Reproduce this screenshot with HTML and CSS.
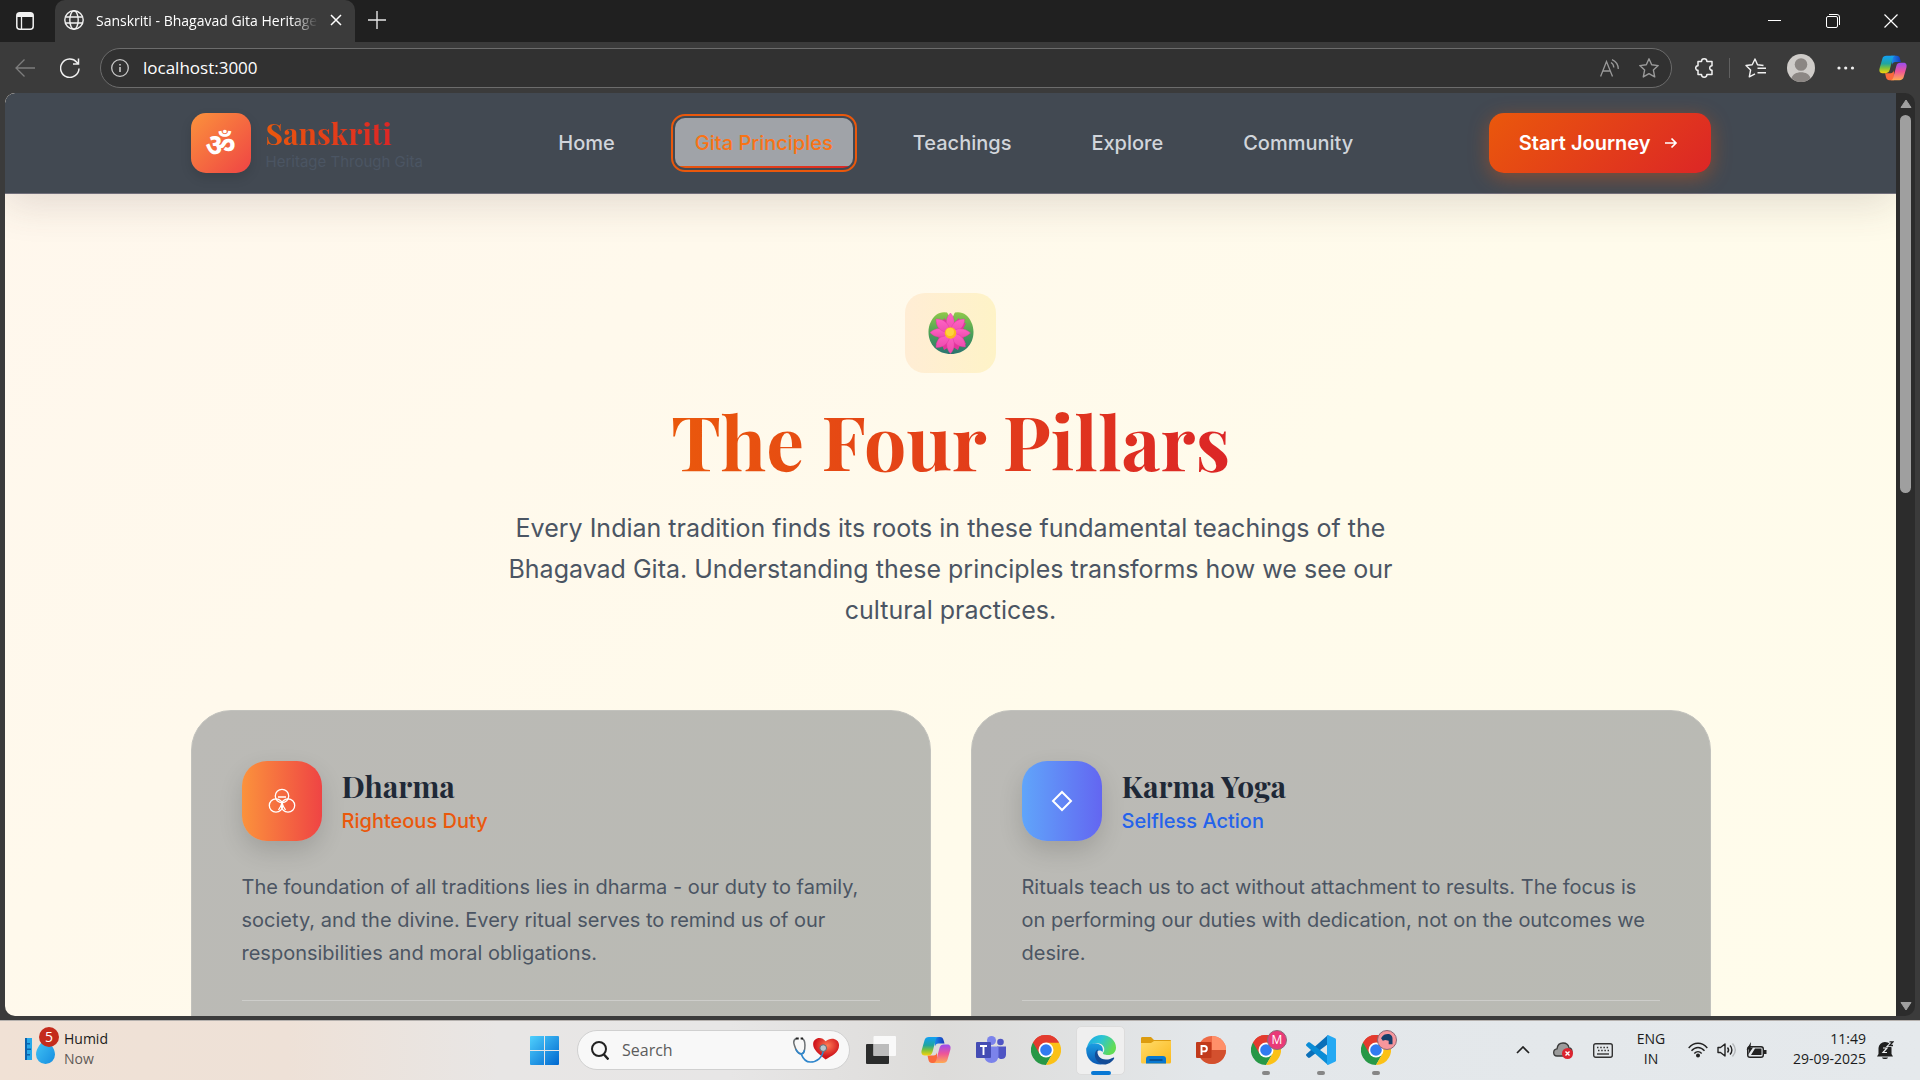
FILE: index.html
```html
<!DOCTYPE html>
<html lang="en">
<head>
<meta charset="utf-8">
<meta name="viewport" content="width=device-width, initial-scale=1">
<title>Sanskriti - Bhagavad Gita Heritage</title>
<link rel="stylesheet" href="styles.css">
</head>
<body>
<svg class="defs" width="0" height="0" aria-hidden="true">
  <defs>
    <linearGradient id="cpA" x1="0" y1="0" x2="0" y2="1"><stop offset="0" stop-color="#12a0f5"/><stop offset=".45" stop-color="#20a5a0"/><stop offset=".7" stop-color="#7cc13c"/><stop offset="1" stop-color="#f8d20c"/></linearGradient>
    <linearGradient id="cpB" x1="0" y1="0" x2="0" y2="1"><stop offset="0" stop-color="#9b4df0"/><stop offset=".5" stop-color="#ee5598"/><stop offset="1" stop-color="#ffab52"/></linearGradient>
    <linearGradient id="cpC" x1="0" y1="0" x2="1" y2="0"><stop offset="0" stop-color="#1c8ff0"/><stop offset="1" stop-color="#1738b8"/></linearGradient>
    <linearGradient id="winG" x1="0" y1="0" x2="1" y2="1"><stop offset="0" stop-color="#4fd0fd"/><stop offset="1" stop-color="#0067cf"/></linearGradient>
    <linearGradient id="edgeTop" x1="0" y1="0" x2="1" y2=".4"><stop offset="0" stop-color="#1ba6e8"/><stop offset=".5" stop-color="#2cc4d4"/><stop offset="1" stop-color="#62dc54"/></linearGradient>
    <linearGradient id="edgeLow" x1="0" y1="0" x2="0" y2="1"><stop offset="0" stop-color="#1b9de2"/><stop offset="1" stop-color="#0a59b4"/></linearGradient>
    <linearGradient id="folderG" x1="0" y1="0" x2="1" y2="1"><stop offset="0" stop-color="#ffdb6a"/><stop offset="1" stop-color="#fbb91c"/></linearGradient>
    <linearGradient id="padG" x1="0" y1="0" x2="0" y2="1"><stop offset="0" stop-color="#8fc84a"/><stop offset=".5" stop-color="#4ba157"/><stop offset="1" stop-color="#2b7470"/></linearGradient>
    <linearGradient id="petalG" x1="0" y1="0" x2="0" y2="1"><stop offset="0" stop-color="#ff62c4"/><stop offset="1" stop-color="#ee4cae"/></linearGradient>
    <radialGradient id="heartG" cx=".55" cy=".35"><stop offset="0" stop-color="#ff7a54"/><stop offset="1" stop-color="#d0161c"/></radialGradient>
    <linearGradient id="dropG" x1="0" y1="0" x2="1" y2="1"><stop offset="0" stop-color="#45c8f6"/><stop offset="1" stop-color="#168de0"/></linearGradient>
    <symbol id="copilot" viewBox="0 0 30 30">
      <path d="M13 2h6c2 0 3 1 3.500 3l1 3.500h-6c-2 0-3 1-3.500 3z" fill="url(#cpC)"/>
      <path d="M16 28h-5c-2 0-3-1-3.500-3L6.500 20.500h6c2 0 3-1 3.500-3z" fill="#fb6a3c"/>
      <path d="M8 2h10c-2 0-2.800 1.200-3.400 3.200L11.500 17c-.7 2.500-2 3.500-4.500 3.500H3.500C.7 20.500 0 18 .6 15.600L3.600 5C4.200 3 5.600 2 8 2z" fill="url(#cpA)"/>
      <path d="M22 28H12c2 0 2.800-1.200 3.400-3.200L18.500 13c.7-2.500 2-3.500 4.500-3.500h3.500c2.800 0 3.500 2.500 2.900 4.900L26.400 25c-.6 2-2 3-4.400 3z" fill="url(#cpB)"/>
    </symbol>
    <symbol id="chrome" viewBox="0 0 30 30">
      <path d="M15 15L2 7.500A15 15 0 0 1 28 7.500z" fill="#e33b2e"/>
      <path d="M15 15L2 7.500A15 15 0 0 0 15 30l6.500-11.200z" fill="#279847"/>
      <path d="M15 15l6.500 3.800L15 30A15 15 0 0 0 28 7.500H15z" fill="#fbc116"/>
      <path d="M15 7.500h13A15 15 0 0 0 2 7.500l6.500 11.300z" fill="#e33b2e"/>
      <circle cx="15" cy="15" r="7.500" fill="#fff"/><circle cx="15" cy="15" r="5.800" fill="#317bf0"/>
    </symbol>
  </defs>
</svg>

<div class="window">
  <header class="titlebar">
    <button class="tab-actions" type="button" aria-label="Tab actions"><svg width="18" height="18" viewBox="0 0 18 18"><rect x=".8" y=".8" width="16.400" height="16.400" rx="3" fill="none" stroke="#f2f2f2" stroke-width="1.500"/><path d="M1 5V3a2 2 0 0 1 2-2h12a2 2 0 0 1 2 2v2z" fill="#f2f2f2"/><path d="M5.500 5v12" stroke="#f2f2f2" stroke-width="1.300"/></svg></button>
    <div class="tab">
      <svg width="20" height="20" viewBox="0 0 20 20" fill="none" stroke="#f2f2f2" stroke-width="1.400"><circle cx="10" cy="10" r="9.200"/><ellipse cx="10" cy="10" rx="4.200" ry="9.200"/><path d="M1.500 7h17M1.500 13h17"/></svg>
      <span class="tab-title">Sanskriti - Bhagavad Gita Heritage</span>
      <button class="tab-close" type="button" aria-label="Close tab"><svg width="12" height="12" viewBox="0 0 12 12" stroke="#fff" stroke-width="1.500"><path d="M1 1l10 10M11 1L1 11"/></svg></button>
    </div>
    <button class="new-tab" type="button" aria-label="New tab"><svg width="18" height="18" viewBox="0 0 18 18" stroke="#e6e6e6" stroke-width="1.400"><path d="M9 0v18M0 9h18"/></svg></button>
    <div class="window-controls">
      <button type="button" aria-label="Minimise"><svg width="14" height="14" viewBox="0 0 14 14" stroke="#fff"><path d="M0 6.500h13"/></svg></button>
      <button type="button" aria-label="Restore"><svg width="14" height="14" viewBox="0 0 14 14" stroke="#fff" fill="none"><rect x=".5" y="2.500" width="11" height="11" rx="1.500"/><path d="M3 .5h8a2.500 2.500 0 0 1 2.500 2.500v8"/></svg></button>
      <button type="button" aria-label="Close"><svg width="14" height="14" viewBox="0 0 14 14" stroke="#fff" stroke-width="1.200"><path d="M.5.500l13 13M13.500.5l-13 13"/></svg></button>
    </div>
  </header>

  <div class="toolbar">
    <button class="tool" type="button" aria-label="Back"><svg width="20" height="18" viewBox="0 0 20 18" fill="none" stroke="#7d7d7d" stroke-width="1.300"><path d="M20 9H1M9.500.5L1 9l8.500 8.500"/></svg></button>
    <button class="tool" type="button" aria-label="Refresh"><svg width="20" height="20" viewBox="0 0 20 20" fill="none" stroke="#f0f0f0" stroke-width="1.500"><path d="M19 10.500A9.200 9.200 0 1 1 16.800 4.200L18.500 6M18.500.5V6H13"/></svg></button>
    <div class="address">
      <svg width="18" height="18" viewBox="0 0 18 18" fill="none" stroke="#c8c8c8" stroke-width="1.300"><circle cx="9" cy="9" r="8.300"/><path d="M9 8v5M9 5v1.500" stroke-width="1.600"/></svg>
      <input type="text" value="localhost:3000" aria-label="Address">
      <button class="read-aloud" type="button" aria-label="Read aloud"><svg width="20" height="18" viewBox="0 0 20 18" fill="none" stroke="#9a9a9a" stroke-width="1.300"><path d="M.6 17.500L6.500 2.500l6 15M2.800 12h7.500M11 3.500c1.700 1 2.700 2.700 2.800 5M12 .6c3.800 1.600 6.200 5 6.300 9.400"/></svg></button>
      <button class="fav" type="button" aria-label="Add to favourites"><svg width="20" height="20" viewBox="0 0 20 20" fill="none" stroke="#9a9a9a" stroke-width="1.400" stroke-linejoin="round"><path d="M10 .8l2.700 6 6.500.8-4.800 4.500 1.300 6.800L10 15.700l-5.700 3.200 1.300-6.800L.8 7.600l6.500-.8z"/></svg></button>
    </div>
    <button class="tool ext" type="button" aria-label="Extensions"><svg width="19" height="20" viewBox="0 0 19 20" fill="none" stroke="#f0f0f0" stroke-width="1.500" stroke-linejoin="round"><path d="M3 3.500h3.500a2.700 2.700 0 0 1 5.400 0H17v4.200a2.300 2.300 0 1 0 0 4.600v4.200h-5.100a2.700 2.700 0 0 1-5.400 0H3v-4.200a2.300 2.300 0 0 1 0-4.600z"/></svg></button>
    <span class="tool-divider"></span>
    <button class="tool" type="button" aria-label="Favourites"><svg width="21" height="20" viewBox="0 0 21 20" fill="none" stroke="#f0f0f0" stroke-width="1.400" stroke-linejoin="round"><path d="M18.500 7.500L12.500 6.700 10 1 7.200 6.700 1 7.500l4.600 4.500L4.300 18.800 10 15.800M12.500 10.200H21M12.500 14.800H21"/></svg></button>
    <button class="tool" type="button" aria-label="Profile"><svg width="28" height="28" viewBox="0 0 28 28"><circle cx="14" cy="14" r="14" fill="#cfccc9"/><circle cx="14" cy="10.500" r="6.300" fill="#8c8784"/><path d="M4.500 24.300c1-4 5-6 9.500-6s8.500 2 9.500 6A14 14 0 0 1 4.500 24.300z" fill="#8c8784"/></svg></button>
    <button class="tool" type="button" aria-label="More"><svg width="18" height="4" viewBox="0 0 18 4" fill="#f0f0f0"><circle cx="2" cy="2" r="1.600"/><circle cx="8.700" cy="2" r="1.600"/><circle cx="15.500" cy="2" r="1.600"/></svg></button>
    <button class="tool copilot" type="button" aria-label="Copilot"><svg width="28" height="28"><use href="#copilot"/></svg></button>
  </div>

  <div class="frame">
    <div class="page">
      <header class="site-header">
        <div class="container header-row">
          <a class="brand" href="#home">
            <span class="brand-mark">ॐ</span>
            <span class="brand-text"><span class="brand-name">Sanskriti</span><span class="brand-tag">Heritage Through Gita</span></span>
          </a>
          <nav class="nav">
            <a href="#home">Home</a>
            <a class="active" href="#principles">Gita Principles</a>
            <a href="#teachings">Teachings</a>
            <a href="#explore">Explore</a>
            <a href="#community">Community</a>
          </nav>
          <button class="cta" type="button">Start Journey <svg width="20" height="20" viewBox="0 0 20 20" fill="none" stroke="#fff" stroke-width="1.700"><path d="M4 10h11M10.500 5.500L15 10l-4.500 4.500"/></svg></button>
        </div>
      </header>

      <main class="container principles" id="principles">
        <div class="lotus">
          <svg width="46" height="42" viewBox="0 0 46 42">
            <path d="M23 1.500C29-.5 34-.3 38 3c4.500 4 7.500 10 7.500 17C45.500 33 36 42 23 42S.5 33 .5 20C.500 13 3.500 7 8 3c4-3.300 9-3.500 15-1.500z" fill="url(#padG)"/>
            <path d="M19 0h8l-4 9z" fill="#fff1cf"/>
            <g fill="#e5339c"><path d="M16 6l4 5 3-8 3 8 5-5 1 6 6-1-3 6 5 4-5 5 3 6-6 1-2 5-7-4-7 4-2-5-6-1 3-6-5-5 5-4-3-6 6 1z"/></g>
            <g fill="url(#petalG)" stroke="#d93b9c" stroke-width=".4">
              <path d="M22 21C16 12 18 5 22.500 1 27 6 28 12 22 21z"/><path d="M22 21C23 11 29 7 36.500 7 37 14 32 20 22 21z"/><path d="M22 21c7-6 15-5 20.500 0C36 27 29 27 22 21z"/><path d="M22 21c10 0 15 5 15.500 14C29 35 23 30 22 21z"/><path d="M22 21c6 9 5 16 .5 20.500C18 37 17 29 22 21z"/><path d="M22 21c0 10-6 15-14 14.500C8 28 13 22 22 21z"/><path d="M22 21c-8 6-15 5-20-.5C8 15 15 15 22 21z"/><path d="M22 21C12 20 8 15 8 7c8-.5 14 5 14 14z"/>
            </g>
            <circle cx="22.500" cy="21" r="5.800" fill="#fcb81f"/><circle cx="22" cy="20" r="4" fill="#ffd43c"/>
          </svg>
        </div>
        <h1>The Four Pillars</h1>
        <p class="lead">Every Indian tradition finds its roots in these fundamental teachings of the Bhagavad Gita. Understanding these principles transforms how we see our cultural practices.</p>

        <div class="cards">
          <article class="card">
            <div class="card-head">
              <span class="card-icon dharma"><svg width="28" height="26" viewBox="0 0 28 26" fill="none" stroke="#fff" stroke-width="1.300"><circle cx="14" cy="8" r="6.700"/><circle cx="8" cy="17.500" r="6.700"/><circle cx="20" cy="17.500" r="6.700"/><path d="M10 9h8M14 13v5M14 16l-3.500 6M14 16l3.500 6"/></svg></span>
              <div><h2>Dharma</h2><p class="sub dharma-text">Righteous Duty</p></div>
            </div>
            <p class="card-text">The foundation of all traditions lies in dharma - our duty to family, society, and the divine. Every ritual serves to remind us of our responsibilities and moral obligations.</p>
            <hr>
          </article>
          <article class="card">
            <div class="card-head">
              <span class="card-icon karma"><svg width="22" height="22" viewBox="0 0 22 22" fill="none" stroke="#fff" stroke-width="2"><path d="M11 2l9 9-9 9-9-9z"/></svg></span>
              <div><h2>Karma Yoga</h2><p class="sub karma-text">Selfless Action</p></div>
            </div>
            <p class="card-text">Rituals teach us to act without attachment to results. The focus is on performing our duties with dedication, not on the outcomes we desire.</p>
            <hr>
          </article>
        </div>
      </main>
    </div>
    <div class="scrollbar">
      <svg width="12" height="10" viewBox="0 0 12 10"><path d="M6 1l5 7.500H1z" fill="#9f9f9f" stroke="#9f9f9f" stroke-linejoin="round"/></svg>
      <div class="track"><div class="thumb"></div></div>
      <svg width="12" height="10" viewBox="0 0 12 10"><path d="M6 9l5-7.500H1z" fill="#9f9f9f" stroke="#9f9f9f" stroke-linejoin="round"/></svg>
    </div>
  </div>
</div>

<footer class="taskbar">
  <button class="weather" type="button">
    <span class="weather-icon">
      <svg width="32" height="28" viewBox="0 0 32 28"><path d="M0 2h7v22H0z" fill="#27a9ea"/><path d="M0 2h2v22H0zM2 7h3v1.500H2zM2 12.500h4V14H2zM2 18h3v1.500H2z" fill="#0b62ad"/><path d="M20.500 1c4 6 9.500 11 9.500 17.500a9.500 9.500 0 0 1-19 0C11 12 16.500 7 20.500 1z" fill="url(#dropG)"/></svg>
      <span class="badge">5</span>
    </span>
    <span class="weather-text"><span>Humid</span><span class="muted">Now</span></span>
  </button>

  <div class="apps">
    <button class="app" type="button" aria-label="Start"><svg width="29" height="29" viewBox="0 0 29 29" fill="url(#winG)"><path d="M1 0h13v14H0V1a1 1 0 0 1 1-1zM15 0h13a1 1 0 0 1 1 1v13H15zM0 15h14v14H1a1 1 0 0 1-1-1zM15 15h14v13a1 1 0 0 1-1 1H15z"/></svg></button>
    <label class="search">
      <svg width="18" height="19" viewBox="0 0 18 19" fill="none" stroke="#222" stroke-width="2"><circle cx="8" cy="8" r="7"/><path d="M12.500 13l5 5.500" stroke-width="2.400"/></svg>
      <input type="text" placeholder="Search" aria-label="Search">
      <svg width="48" height="28" viewBox="0 0 50 28"><path d="M35 24C28 18 22 14 22 8c0-7 9-9 13-3 5-5 14-3 14 4 0 8-8 11-14 15z" fill="url(#heartG)"/><path d="M4.500 2C2 3 1 5 2.500 9c1.500 5 4 9 7 9s4-4 4-9c0-4-.5-6-3-7" fill="none" stroke="#6d7275" stroke-width="1.600"/><path d="M4 13c1.500 3 3 5 5.500 5 2 0 3-1 3.500-4M9.500 18c2 5 5 8.500 9.500 8.500 7 0 13-5 13.500-12" fill="none" stroke="#2f86cc" stroke-width="1.700"/><circle cx="32.500" cy="12" r="3.500" fill="#b9c7cf" stroke="#5b6a73"/><path d="M4 2h3M9 2h2.500" stroke="#222" stroke-width="2"/></svg>
    </label>
    <button class="app" type="button" aria-label="Task view"><svg width="30" height="28" viewBox="0 0 30 28"><rect y="8" width="23" height="20" rx="1" fill="#2b2c2c"/><rect x="7.500" y="0" width="22.500" height="20" rx="1" fill="#fcfcfc" opacity=".9"/><path d="M7.500 8H23v12H7.500z" fill="#bcbcbc"/></svg></button>
    <button class="app" type="button" aria-label="Copilot"><svg width="30" height="30"><use href="#copilot"/></svg></button>
    <button class="app" type="button" aria-label="Teams"><svg width="30" height="28" viewBox="0 0 30 28"><circle cx="24.500" cy="6" r="3.300" fill="#4f55c4"/><circle cx="15.500" cy="4.500" r="4.500" fill="#7b83eb"/><path d="M21 10.500h9v8c0 3-2 4.500-4.500 4.500S21 21 21 18z" fill="#4f55c4"/><path d="M8 10.500h14.500V19c0 5-3 8-7 8s-7.500-3-7.500-8z" fill="#7b83eb"/><rect y="6" width="15" height="16" rx="1" fill="#444cb4"/><path d="M4 10h7M7.500 10v9" stroke="#fff" stroke-width="1.900"/></svg></button>
    <button class="app" type="button" aria-label="Chrome"><svg width="30" height="30"><use href="#chrome"/></svg></button>
    <button class="app active-app" type="button" aria-label="Edge"><svg width="30" height="30" viewBox="0 0 30 30"><path d="M1 12C3 5 8 0 15.500 0 24 0 30 6 30 12.500c0 5-3.500 7.500-8 7.500-3.500 0-5.500-1-5-2 2.500-3 1.500-8.500-4-9.500C8 7.500 4 9 1 12z" fill="url(#edgeTop)"/><path d="M.3 13C3 8.500 8 7.500 12.500 9c4 1.300 5 5 4 8-3-3-6.500-1-6.500 2.500 0 4.500 4.500 9 10 9C11 32-1 26.500.3 13z" fill="url(#edgeLow)"/><path d="M12 14.500c-2 5 2 10 8 10 3 0 5.500-1 7-1.800 1-.5 1.500.2 1 1C26 27 22 29.500 18.500 29.500 11.500 29 8 23 9 18.500c.4-2 1.500-3.500 3-4z" fill="#134c97"/></svg></button>
    <button class="app" type="button" aria-label="File Explorer"><svg width="30" height="27" viewBox="0 0 30 27"><path d="M0 1.500C0 .5.500 0 1.500 0H10l3 3h16c.6 0 1 .4 1 1v6H0z" fill="#dc9c10"/><path d="M0 6h10l3-2h17v21a1.500 1.500 0 0 1-1.500 1.500h-27A1.500 1.500 0 0 1 0 25z" fill="url(#folderG)"/><path d="M5 26.500V22c0-2 1-3 3-3h14c2 0 3 1 3 3v4.500z" fill="#0878d0"/><path d="M8.500 23h13" stroke="#0a3f78" stroke-width="1.300"/></svg></button>
    <button class="app" type="button" aria-label="PowerPoint"><svg width="30" height="28" viewBox="0 0 30 28"><circle cx="16" cy="14" r="14" fill="#ee6a46"/><path d="M16 0a14 14 0 0 1 14 14H16z" fill="#ff9069"/><path d="M2 14h28a14 14 0 0 1-28 0z" fill="#d3502e"/><rect y="6" width="15.500" height="16" rx="1" fill="#c13a1b"/><path d="M5.500 19v-9h2.700a2.700 2.700 0 0 1 0 5.400H5.500" fill="none" stroke="#fff" stroke-width="1.900"/></svg></button>
    <button class="app running" type="button" aria-label="Chrome, profile M"><svg width="30" height="30"><use href="#chrome"/></svg><span class="profile">M</span></button>
    <button class="app running" type="button" aria-label="Visual Studio Code"><svg width="30" height="30" viewBox="0 0 30 30"><path d="M22 0v9L4 22.500c-.7.500-1.500.5-2 0L.5 21c-.7-.7-.6-1.500 0-2z" fill="#0b6fb8"/><path d="M22 30v-9L4 7.500c-.7-.5-1.500-.5-2 0L.5 9c-.7.700-.6 1.500 0 2z" fill="#0a8cd6"/><path d="M22 0l7 3.200c.6.300 1 .8 1 1.500v20.600c0 .7-.4 1.200-1 1.500L22 30c-.7-.3-1-1-1-1.500v-27C21 1 21.300.3 22 0z" fill="#25a9f3"/></svg></button>
    <button class="app running" type="button" aria-label="Chrome, second profile"><svg width="30" height="30"><use href="#chrome"/></svg><span class="profile alt"><svg width="12" height="11" viewBox="0 0 14 13"><path d="M0 5C2 1 5 0 8 0c4 0 6 3 5.500 7v5H9V8L5 7 2 8z" fill="#173f6b"/></svg></span></button>
  </div>

  <div class="tray">
    <button class="tray-btn" type="button" aria-label="Show hidden icons"><svg width="14" height="8" viewBox="0 0 14 8" fill="none" stroke="#222" stroke-width="1.700"><path d="M1 7l6-6 6 6"/></svg></button>
    <button class="tray-btn" type="button" aria-label="OneDrive"><svg width="20" height="17" viewBox="0 0 20 17"><path d="M4 14C1.500 14 .7 12.500.7 10.500S2 7 4 6.800C4.500 3 7 1 10 1c3.500 0 5.500 2 6 5 1.500 0 3 1.500 3 4s-1.500 4-3.500 4z" fill="#9b9b9b" stroke="#3b3b3b" stroke-width="1.300"/><circle cx="14.500" cy="11.500" r="5.500" fill="#dc2430"/><path d="M12.500 9.500l4 4M16.500 9.500l-4 4" stroke="#fff" stroke-width="1.400"/></svg></button>
    <button class="tray-btn" type="button" aria-label="Touch keyboard"><svg width="20" height="15" viewBox="0 0 20 15" fill="none" stroke="#333" stroke-width="1.400"><rect x=".7" y=".7" width="18.600" height="13.600" rx="2"/><path d="M4 4.500h12M5 7.500h11" stroke-dasharray="1.500 1.700"/><path d="M4 11h12"/></svg></button>
    <button class="lang" type="button"><span>ENG</span><span>IN</span></button>
    <button class="status" type="button" aria-label="Network, volume, battery">
      <svg width="20" height="16" viewBox="0 0 20 16" fill="none" stroke="#222" stroke-width="1.400"><path d="M.7 6C6-.3 14-.3 19.300 6M3.500 8.800c4-4.500 9-4.500 13 0M6.300 11.500c2.200-2.500 5.200-2.500 7.400 0"/><circle cx="10" cy="13.500" r="1.300" fill="#222"/></svg>
      <svg width="20" height="18" viewBox="0 0 20 18" fill="none" stroke="#222" stroke-width="1.400" stroke-linejoin="round"><path d="M1 6.500h2.500L8 3v12l-4.500-3.500H1zM10.500 6.500c1.300 1.500 1.300 3.500 0 5M13 4.500c2.500 2.500 2.500 6.500 0 9"/><path d="M15.500 2.500c3.500 4 3.500 9 0 13" stroke="#b5b8bb"/></svg>
      <svg width="21" height="17" viewBox="0 0 21 17"><rect x="1.700" y="4.700" width="15.600" height="10.600" rx="2.300" fill="none" stroke="#222" stroke-width="1.400"/><path d="M5 13l4-6.500h6.500V13zM18 8h2.500v4H18zM5 0L.5 7.500H3L2 13l5-7.500H4.500z" fill="#222"/></svg>
    </button>
    <button class="clock" type="button"><span>11:49</span><span>29-09-2025</span></button>
    <button class="bell" type="button" aria-label="Notifications"><svg width="17" height="19" viewBox="0 0 17 19"><path d="M1.500 13V7a6.300 6.300 0 0 1 6.500-6c4 0 6.500 3 6.500 6v6l1.500 2.500H0zM5 16.500h6c-.5 2-5.500 2-6 0z" fill="#1f1f1f"/><path d="M12.500.8H16l-3.500 3.700H16" fill="none" stroke="#e5e9ec" stroke-width="3.200"/><path d="M6 7h4l-4 4.500h4" fill="none" stroke="#eef0f2" stroke-width="1.200"/><path d="M12.500.8H16l-3.500 3.700H16" fill="none" stroke="#1f1f1f" stroke-width="1.300"/></svg></button>
  </div>
</footer>
</body>
</html>
```

FILE: styles.css
```css
* { box-sizing: border-box; }

body {
  margin: 0;
  height: 100vh;
  display: flex;
  flex-direction: column;
  overflow: hidden;
  background: #3b3b3b;
  font-family: Inter, "Noto Sans", sans-serif;
  font-size: 20px;
}

button {
  padding: 0;
  border: 0;
  background: none;
  color: inherit;
  font: inherit;
}

svg { display: block; flex: none; }
.defs { position: absolute; }
h1, h2, p { margin: 0; }

/* Browser window */
.window {
  flex: 1;
  min-height: 0;
  display: flex;
  flex-direction: column;
}

.titlebar {
  flex: none;
  height: 42px;
  display: flex;
  align-items: center;
  background: #202020;
  color: #fff;
}

.tab-actions {
  width: 55px;
  height: 42px;
  padding-left: 16px;
}

.tab {
  width: 300px;
  height: 42px;
  display: flex;
  align-items: center;
  gap: 12px;
  padding: 0 13px 2px 9px;
  border-radius: 10px 10px 0 0;
  background: #3b3b3b;
}

.tab-title {
  flex: 1;
  overflow: hidden;
  white-space: nowrap;
  font-family: "Open Sans", sans-serif;
  font-size: 14px;
  mask-image: linear-gradient(90deg, #000 88%, transparent);
}

.new-tab { margin-left: 13px; padding-bottom: 2px; }

.window-controls { margin-left: auto; display: flex; }
.window-controls button {
  width: 58px;
  height: 42px;
  display: grid;
  place-items: center;
}

.toolbar {
  flex: none;
  height: 51px;
  display: flex;
  align-items: center;
  padding: 0 5px 0 2px;
  background: #3b3b3b;
}

.tool {
  width: 45px;
  height: 45px;
  display: grid;
  place-items: center;
}
.copilot { margin-left: 2px; }

.address {
  flex: 1;
  height: 40px;
  display: flex;
  align-items: center;
  margin: 0 10px 0 8px;
  padding: 0 12px 0 10px;
  border: 1px solid #6c6c6c;
  border-radius: 20px;
  background: #313131;
}

.address input {
  flex: 1;
  min-width: 0;
  padding: 0 0 0 14px;
  border: 0;
  outline: 0;
  background: none;
  color: #fff;
  font: 17px "Open Sans", sans-serif;
}

.fav { margin-left: 19px; }
.tool-divider { width: 1px; height: 20px; margin: 0 3px 0 2px; background: #606060; }

.frame {
  flex: 1;
  min-height: 0;
  display: flex;
  margin: 0 5px 4px;
}

.page {
  flex: 1;
  min-width: 0;
  overflow: hidden;
  border-radius: 10px 0 0 10px;
  background: linear-gradient(135deg, #fff7ed 0%, #fffbeb 60%, #fffceb 100%);
}

.scrollbar {
  width: 19px;
  display: flex;
  flex-direction: column;
  align-items: center;
  gap: 6px;
  padding: 6px 0 5px;
  border-radius: 0 10px 10px 0;
  background: #2c2c2c;
}

.track { flex: 1; }
.thumb { width: 11px; height: 43%; border-radius: 6px; background: #9f9f9f; }

/* Site header */
.container {
  width: 100%;
  max-width: 1600px;
  margin: 0 auto;
  padding: 0 40px;
}

.site-header {
  position: relative;
  border-bottom: 1px solid #716f7b;
  border-top-left-radius: 10px;
  background: #424952;
  box-shadow: 0 10px 40px rgba(80, 60, 60, .16);
}

.header-row {
  display: flex;
  align-items: center;
  justify-content: space-between;
  padding-top: 20px;
  padding-bottom: 20px;
}

.brand {
  display: flex;
  align-items: center;
  gap: 15px;
  text-decoration: none;
}

.brand-mark {
  width: 60px;
  height: 60px;
  display: grid;
  place-items: center;
  border-radius: 15px;
  background: linear-gradient(135deg, #fb923c, #ef4444);
  color: #fff;
  font: bold 30px "Noto Sans", "Noto Sans Devanagari", sans-serif;
  box-shadow: 0 5px 12px rgba(0, 0, 0, .12);
}

.brand-text { display: flex; flex-direction: column; }

.brand-name {
  align-self: flex-start;
  background: linear-gradient(90deg, #ea580c, #dc2626);
  background-clip: text;
  color: transparent;
  font: bold 30px/38px "Playfair Display", "Liberation Serif", serif;
}

.brand-tag { color: #4b5563; font-size: 15px; line-height: 20px; }

.nav { display: flex; gap: 40px; }

.nav a {
  padding: 10px 20px;
  color: #d1d5db;
  font-weight: 500;
  line-height: 30px;
  text-decoration: none;
}

.nav .active {
  border-radius: 10px;
  outline: 2px solid #ea580c;
  outline-offset: 2px;
  background: linear-gradient(90deg, #ea580c, #dc2626) bottom / 100% 2px no-repeat #a0a3a8;
  color: #f97316;
}

.cta {
  height: 60px;
  display: flex;
  align-items: center;
  gap: 10px;
  padding: 0 30px;
  border-radius: 15px;
  background: linear-gradient(135deg, #ea580c, #dc2626);
  color: #fff;
  font-weight: 600;
  box-shadow: 0 5px 20px rgba(234, 88, 12, .4);
}

/* Principles */
.principles {
  display: flex;
  flex-direction: column;
  align-items: center;
  padding-top: 99px;
}

.lotus {
  width: 91px;
  height: 80px;
  display: grid;
  place-items: center;
  border-radius: 20px;
  background: linear-gradient(90deg, #ffedd5, #fef3c7);
}

h1 {
  margin: 20px 0;
  background: linear-gradient(90deg, #ea580c, #dc2626);
  background-clip: text;
  color: transparent;
  font: bold 75px/95px "Playfair Display", "Liberation Serif", serif;
}

.lead {
  max-width: 900px;
  color: #4b5563;
  font-size: 25px;
  line-height: 41px;
  text-align: center;
}

.cards {
  align-self: stretch;
  display: grid;
  grid-template-columns: 1fr 1fr;
  gap: 40px;
  margin-top: 79px;
}

.card {
  padding: 50px;
  border: 1px solid #c2c2bd;
  border-radius: 40px;
  background: linear-gradient(135deg, #bbbab6, #b9bab3);
}

.card-head { display: flex; align-items: center; gap: 20px; }

.card-icon {
  width: 80px;
  height: 80px;
  display: grid;
  place-items: center;
  border-radius: 25px;
  box-shadow: 0 10px 25px rgba(0, 0, 0, .14);
}

.dharma { background: linear-gradient(90deg, #fb923c, #ef4444); }
.karma { background: linear-gradient(90deg, #60a5fa, #6366f1); }

h2 {
  color: #1f2937;
  font: bold 30px/40px "Playfair Display", "Liberation Serif", serif;
}

.sub { font-weight: 500; line-height: 30px; }
.dharma-text { color: #ea580c; }
.karma-text { color: #2563eb; }

.card-text { margin-top: 30px; color: #4b5563; line-height: 33px; }

hr { margin: 30px 0 50px; border: 0; border-top: 1px solid #cdcdca; }

/* Taskbar */
.taskbar {
  flex: none;
  height: 60px;
  display: grid;
  grid-template-columns: 1fr auto 1fr;
  align-items: center;
  box-shadow: inset 0 1px #b5b1ae;
  background: linear-gradient(90deg, #f0e1d5 0%, #eee1d7 15%, #e8e6e5 26%, #e7e6e6 38%, #dddcda 49%, #e3e7ea 63%, #e5e9ec 100%);
  color: #1b1b1b;
  font-family: "Open Sans", sans-serif;
  font-size: 14px;
  line-height: 20px;
}

.weather {
  display: flex;
  align-items: center;
  gap: 7px;
  justify-self: start;
  padding-left: 25px;
  text-align: left;
}

.weather-icon { position: relative; }

.badge {
  position: absolute;
  top: -9px;
  left: 14px;
  width: 20px;
  height: 20px;
  border-radius: 50%;
  background: #c42b1c;
  color: #fff;
  text-align: center;
}

.weather-text, .lang, .clock { display: flex; flex-direction: column; }
.weather-text, .lang, .clock { padding-bottom: 2px; }
.muted { color: #5f5a57; }

.apps { display: flex; align-items: center; }

.app {
  position: relative;
  width: 55px;
  height: 49px;
  display: grid;
  place-items: center;
}

.search {
  width: 273px;
  height: 40px;
  display: flex;
  align-items: center;
  margin: 0 3px 0 5px;
  padding: 0 9px 0 13px;
  border: 1px solid #d0d0d0;
  border-radius: 20px;
  background: #f8f8f8;
}

.search input {
  flex: 1;
  min-width: 0;
  padding: 0 0 0 13px;
  border: 0;
  outline: 0;
  background: none;
  font: 16px "Open Sans", sans-serif;
}

.search input::placeholder { color: #5c5c5c; opacity: 1; }

.active-app::before {
  content: "";
  position: absolute;
  z-index: -1;
  inset: 0 3px;
  border: 1px solid #dcdcdc;
  border-radius: 5px;
  background: #efefef;
}
.active-app { z-index: 0; }

.active-app::after, .running::after {
  content: "";
  position: absolute;
  bottom: 0;
  left: 50%;
  width: 8px;
  height: 4px;
  border-radius: 2px;
  background: #868686;
  translate: -50%;
}
.active-app::after { width: 20px; background: #0878d4; }

.profile {
  position: absolute;
  top: 4px;
  right: 6px;
  width: 20px;
  height: 20px;
  display: grid;
  place-items: center;
  border: 1px solid #8d6a78;
  border-radius: 50%;
  background: #e93a78;
  color: #fff;
  font-size: 12px;
  line-height: 18px;
}
.profile.alt { background: #f7969c; }

.tray {
  justify-self: end;
  display: flex;
  align-items: center;
  padding-right: 26px;
}

.tray-btn { width: 40px; display: grid; place-items: center; }
.lang { width: 56px; align-items: center; }
.status { display: flex; align-items: center; gap: 9px; margin-left: 9px; }
.clock { width: 99px; align-items: flex-end; white-space: nowrap; }
.bell { margin-left: 11px; }
```
